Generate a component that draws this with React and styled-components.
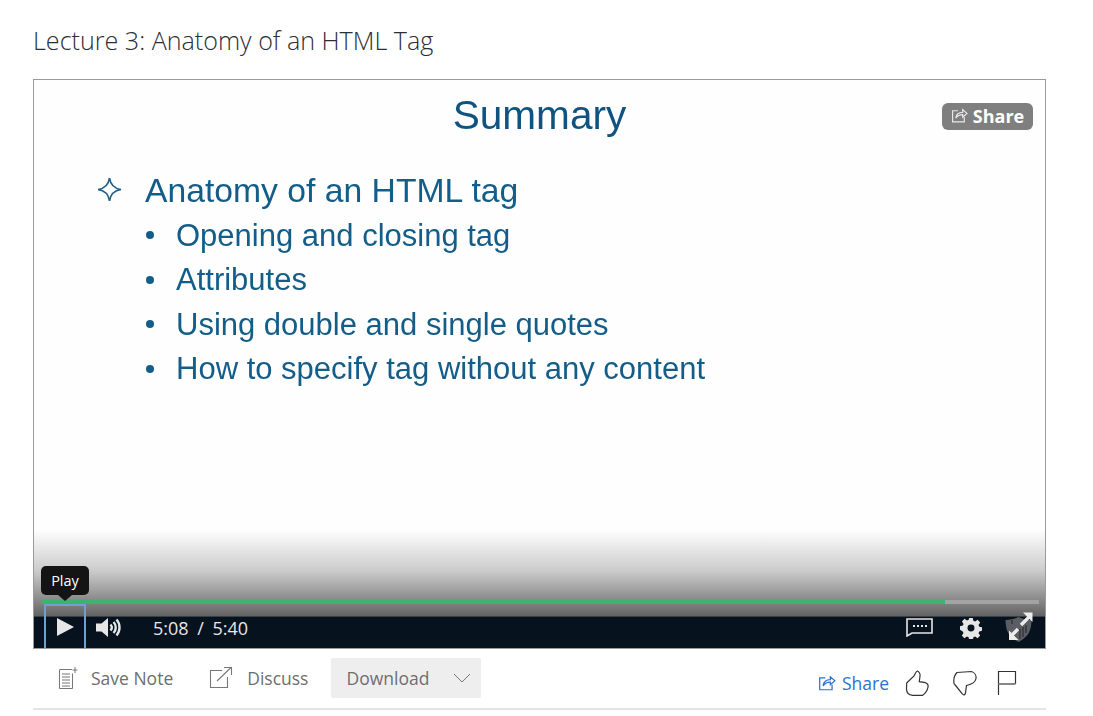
import React from "react";
import styled, { createGlobalStyle } from "styled-components";

const GlobalStyle = createGlobalStyle`
  html, body {
    margin: 0;
    background: #fff;
    font-family: "Open Sans", sans-serif;
  }
`;

const Page = styled.div`
  width: 1013px;
  height: 716px;
  padding-left: 33px;
  overflow: hidden;
`;

const Title = styled.h1`
  margin: 0;
  height: 79px;
  padding-top: 24px;
  box-sizing: border-box;
  font-size: 25.1px;
  line-height: 33px;
  font-weight: 350;
  color: #2b2f34;
`;

// Video player
const Player = styled.div`
  position: relative;
  box-sizing: border-box;
  height: 570px;
  border: 1px solid #9a9a9a;
  display: flex;
  flex-direction: column;
`;

const Slide = styled.div`
  flex: 1;
  background: #fefefe;
  color: #135d89;
  font-family: "Liberation Sans", Arial, sans-serif;
`;

const SlideText = styled.div`
  filter: blur(0.35px);
`;

const SlideTitle = styled.div`
  padding-top: 11px;
  text-align: center;
  font-size: 40.6px;
  line-height: 48px;
  color: #0f5480;
`;

const Heading = styled.div`
  display: flex;
  align-items: center;
  margin: 28.5px 0 0 62px;
  font-size: 33.7px;
  line-height: 44px;
  gap: 22px;
`;

const BulletList = styled.ul`
  list-style: none;
  margin: 2px 0 0 112px;
  padding: 0;
`;

const Bullet = styled.li`
  display: flex;
  align-items: center;
  gap: 22px;
  height: 44.5px;
  font-size: 31px;

  &::before {
    content: "";
    width: 8px;
    height: 8px;
    border-radius: 50%;
    background: #135d89;
    flex: none;
    margin-top: -1px;
  }
`;

const VideoShare = styled.div`
  position: absolute;
  top: 23px;
  right: 12px;
  width: 91px;
  height: 27px;
  padding-bottom: 2px;
  box-sizing: border-box;
  border-radius: 6px;
  background: #7f7f7f;
  color: #fff;
  display: flex;
  align-items: center;
  justify-content: center;
  gap: 5px;
  font-size: 18px;
  font-weight: 700;
`;

const Shade = styled.div`
  position: absolute;
  left: 0;
  right: 0;
  bottom: 32px;
  height: 86px;
  background: linear-gradient(
    to bottom,
    rgba(255, 255, 255, 0),
    #cccccc 47%,
    #a0a0a0 70%,
    #636363
  );
`;

const Track = styled.div`
  position: absolute;
  left: 7px;
  right: 6px;
  bottom: 44px;
  height: 4px;
  background: #a3a3a3;
`;

const TrackFill = styled.div`
  height: 100%;
  background: #3cb371;
`;

const ControlBar = styled.div`
  position: relative;
  flex: none;
  height: 32px;
  background: #06121e;
  border-top: 1px solid #3a3f44;
  box-sizing: border-box;
  display: flex;
  align-items: center;
  padding: 0 12px 10px 10px;
  color: #e6e6e6;
`;

const PlayButton = styled.div`
  align-self: flex-end;
  flex: none;
  width: 42px;
  height: 44px;
  box-sizing: border-box;
  margin-bottom: -10px;
  border: 2px solid #6f9fd8;
  border-bottom: 0;
  display: flex;
  align-items: flex-end;
  justify-content: center;
  padding-bottom: 12px;
`;

const Tooltip = styled.div`
  position: absolute;
  left: 7px;
  bottom: 53px;
  width: 48px;
  height: 29px;
  border-radius: 5px;
  background: #141414;
  color: #fff;
  font-size: 14.5px;
  display: flex;
  align-items: center;
  justify-content: center;

  &::after {
    content: "";
    position: absolute;
    left: 17px;
    bottom: -6px;
    border-left: 7px solid transparent;
    border-right: 7px solid transparent;
    border-top: 6px solid #141414;
  }
`;

const Volume = styled.div`
  display: flex;
  margin-left: 10px;
`;

const Time = styled.div`
  margin-left: 32px;
  font-size: 18px;
  word-spacing: 4px;
`;

const RightControls = styled.div`
  margin-left: auto;
  display: flex;
  align-items: center;
  gap: 23px;
`;

const CaptionIcon = styled.svg`
  margin-right: 4px;
`;

const Fullscreen = styled.div`
  width: 28px;
  height: 30px;
  margin-top: -2px;
`;

// Row below the player
const ActionRow = styled.div`
  box-sizing: border-box;
  height: 61px;
  border-bottom: 2px solid #e4e4e4;
  display: flex;
  align-items: flex-start;
  padding: 9px 0 0 24px;
  font-size: 17.5px;
  color: #6e6e6e;
`;

const Action = styled.div`
  display: flex;
  align-items: center;
  height: 40px;
  gap: ${(p) => p.$gap}px;
  margin-right: ${(p) => p.$right}px;
`;

const DownloadButton = styled.div`
  width: 150px;
  height: 40px;
  box-sizing: border-box;
  background: #eeeeee;
  border-radius: 2px;
  display: flex;
  align-items: center;
  justify-content: space-between;
  padding: 0 10px 0 15px;
`;

const RightActions = styled.div`
  margin-left: auto;
  margin-right: 29px;
  display: flex;
  align-items: center;
  height: 50px;
`;

const ShareLink = styled.div`
  display: flex;
  align-items: center;
  gap: 6px;
  color: #2a73cc;
  margin-right: 16px;
`;

const Thumbs = styled.div`
  display: flex;
  align-items: center;
  gap: 20px;
`;

const ShareIcon = ({ size = 16, color = "currentColor" }) => (
  <svg width={size} height={size} viewBox="0 0 16 16" fill="none" stroke={color} strokeWidth="1.1">
    <path d="M6.500 3.500H1.500v10.500h11V9.500" />
    <path d="M4.500 10.500C5 7 7.500 5 11 5V2.500L15 6l-4 3.500V7.200c-2.500 0-4.800 1-6.500 3.300z" />
  </svg>
);

const App = () => (
  <Page>
    <GlobalStyle />
    <Title>Lecture 3: Anatomy of an HTML Tag</Title>
    <Player>
      <Slide>
        <SlideText>
          <SlideTitle>Summary</SlideTitle>
          <Heading>
            <svg width="27" height="27" viewBox="0 0 27 27" fill="none" stroke="#1f5f8b" strokeWidth="1.7">
              <path d="M13.500 2C14.500 9 18 12.500 25 13.500 18 14.500 14.500 18 13.500 25 12.500 18 9 14.500 2 13.500 9 12.500 12.500 9 13.500 2z" />
            </svg>
            Anatomy of an HTML tag
          </Heading>
          <BulletList>
            <Bullet>Opening and closing tag</Bullet>
            <Bullet>Attributes</Bullet>
            <Bullet>Using double and single quotes</Bullet>
            <Bullet>How to specify tag without any content</Bullet>
          </BulletList>
        </SlideText>
      </Slide>
      <VideoShare>
        <ShareIcon size={17} color="#e8e8e8" />
        Share
      </VideoShare>
      <Shade />
      <Track>
        <TrackFill style={{ width: `${(308 / 340) * 100}%` }} />
      </Track>
      <Tooltip>Play</Tooltip>
      <ControlBar>
        <PlayButton>
          <svg width="17" height="18" viewBox="0 0 17 18">
            <path d="M0 0l17 9-17 9z" fill="#e6e6e6" />
          </svg>
        </PlayButton>
        <Volume>
          <svg width="25" height="21" viewBox="0 0 25 21" fill="none" stroke="#e6e6e6">
            <path d="M0 6.500h5.500L12 1v19l-6.500-5.500H0z" fill="#e6e6e6" stroke="none" />
            <path d="M14.500 7.500c1.500 1.700 1.500 4.300 0 6" strokeWidth="2.400" />
            <path d="M17.500 5c3 3 3 8 0 11" strokeWidth="2.400" />
            <path d="M20.500 2.500c4 4.500 4 11.500 0 16" strokeWidth="2.400" />
          </svg>
        </Volume>
        <Time>5:08 / 5:40</Time>
        <RightControls>
          <CaptionIcon width="27" height="19" viewBox="0 0 27 19" fill="none">
            <path d="M1 1h25v14H6l-5 3z" stroke="#e6e6e6" strokeWidth="1.600" />
            <path d="M7 8h2M11 8h2M15 8h2M19 8h2" stroke="#e6e6e6" strokeWidth="2" />
          </CaptionIcon>
          <svg width="22" height="22" viewBox="0 0 24 24">
            <path
              fillRule="evenodd"
              fill="#e6e6e6"
              d="M10 1h4l.6 3.100 1.900.8 2.700-1.800 2.800 2.800-1.800 2.700.8 1.900 3.100.6v4l-3.100.6-.8 1.900 1.800 2.700-2.800 2.800-2.700-1.800-1.900.8-.6 3.100h-4l-.6-3.100-1.900-.8-2.700 1.800-2.800-2.800 1.800-2.700-.8-1.900L0 14v-4l3.100-.6.8-1.900-1.800-2.700 2.800-2.800 2.700 1.800 1.900-.8zM12 8.200a3.800 3.800 0 1 0 0 7.600 3.800 3.800 0 0 0 0-7.600z"
            />
          </svg>
          <Fullscreen>
            <svg width="28" height="30" viewBox="0 0 28 30">
              <path d="M0.500 8c4 0 9-1 13-3 4 2 9 3 13 3 0 10-3 17-13 22C3.500 25 .5 18 .5 8z" fill="#5a5e62" />
              <path d="M15 17v10M18 15v10M21 13v8M7 8v4" stroke="#2a2f34" strokeWidth="1.200" />
              <path d="M16 13l8-8" stroke="#ececec" strokeWidth="3.400" />
              <path d="M18 0.500h9.500V10z" fill="#ececec" />
              <path d="M13 17l-6 6" stroke="#ececec" strokeWidth="3.400" />
              <path d="M4 18.500V28h9.500z" fill="#ececec" />
            </svg>
          </Fullscreen>
        </RightControls>
      </ControlBar>
    </Player>
    <ActionRow>
      <Action $gap={12} $right={36}>
        <svg width="22" height="24" viewBox="0 0 22 24" fill="none" stroke="#777" strokeWidth="1">
          <path d="M15 3.500H2.500v19h13v-15" />
          <path d="M5 8h8M5 11h8M5 14h8M5 17h8M5 20h8" />
          <path d="M18 1v6M15.500 4h5" />
        </svg>
        Save Note
      </Action>
      <Action $gap={13} $right={23}>
        <svg width="25" height="24" viewBox="0 0 25 24" fill="none" stroke="#777" strokeWidth="1.100">
          <path d="M13 4.500H1.500v17h17V11" />
          <path d="M8 15L22 1.500M15 1.500h7.500V9" />
        </svg>
        Discuss
      </Action>
      <DownloadButton>
        Download
        <svg width="18" height="10" viewBox="0 0 18 10" fill="none" stroke="#777" strokeWidth="1">
          <path d="M1 1l8 8 8-8" />
        </svg>
      </DownloadButton>
      <RightActions>
        <ShareLink>
          <ShareIcon size={18} />
          Share
        </ShareLink>
        <Thumbs>
          <svg width="28" height="27" viewBox="0 0 28 27" fill="none" stroke="#333" strokeWidth="1.200">
            <path d="M1.700 13L9 6c1-2 2-4.500 3.300-5 1.700.5 3.200 3 2.700 5l-.7 5.700 6.200 1c2 .8 3 2.300 2.500 4.300-.5 3-2 6-5.300 8.300h-10C4 25 1.500 23 1.500 19z" />
          </svg>
          <svg width="24" height="27" viewBox="0 0 24 27" fill="none" stroke="#333" strokeWidth="1.200">
            <path d="M4 2.500l14.500-1c3 1 5 4 4.500 7-.5 3.500-3 5.500-9.500 7l-1 7.500c-.5 2-2 2.500-3 1L3 16l-2-2.500C.5 10 1.500 5 4 2.500z" />
          </svg>
          <svg width="20" height="26" viewBox="0 0 20 26" fill="none" stroke="#333" strokeWidth="1.200">
            <path d="M1.500 25V1.500h17V14" />
            <path d="M1.500 14h17" stroke="#888" strokeWidth="2" />
          </svg>
        </Thumbs>
      </RightActions>
    </ActionRow>
  </Page>
);

export default App;
